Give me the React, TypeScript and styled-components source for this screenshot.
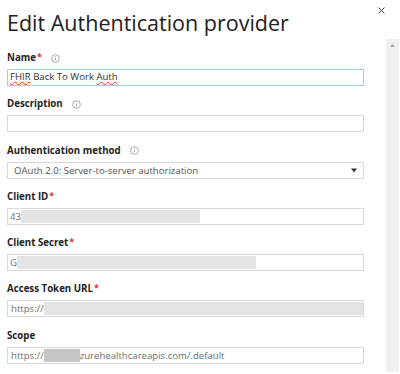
import styled, { createGlobalStyle } from "styled-components";

const GlobalStyle = createGlobalStyle`
  html, body {
    margin: 0;
    padding: 0;
    background: #fff;
  }
  body {
    font-family: "Open Sans", "Noto Sans", sans-serif;
    color: #323130;
  }
`;

const Panel = styled.div`
  width: 400px;
  height: 374px;
  overflow: hidden;
  background: #fff;
  display: flex;
  flex-direction: column;
`;

const Header = styled.div`
  flex-shrink: 0;
  display: flex;
  justify-content: space-between;
  align-items: flex-start;
  padding: 0 15px 0 7px;
  height: 39px;
`;

const Title = styled.h1`
  margin: 10px 0 0;
  font-size: 21.5px;
  font-weight: 400;
  color: #222;
  line-height: 26px;
`;

const CloseBtn = styled.button`
  border: none;
  background: none;
  padding: 0;
  width: 7px;
  height: 7px;
  margin-top: 7px;
  cursor: pointer;
  display: flex;
`;

const Body = styled.div`
  display: flex;
  flex: 1;
  min-height: 0;
  overflow: hidden;
`;

const Form = styled.div`
  flex-shrink: 0;
  width: 357px;
  padding: 11px 0 0 7px;
  display: flex;
  flex-direction: column;
  gap: 10.3px;
`;

const Scrollbar = styled.div`
  margin-left: 22px;
  width: 13px;
  height: 333px;
  background: #f0f0f0;
  display: flex;
  justify-content: center;
  padding-top: 5px;
  box-sizing: border-box;
`;

const Field = styled.div`
  display: flex;
  flex-direction: column;
  gap: 5px;
`;

const Label = styled.div`
  box-sizing: border-box;
  display: flex;
  align-items: center;
  height: 14px;
  padding-top: 2px;
  line-height: 12px;
  font-size: 9.7px;
  font-weight: 700;
  color: #252423;
`;

const Req = styled.span`
  color: #d13438;
  margin-left: 1px;
  align-self: flex-start;
  font-size: 9px;
  line-height: 9px;
`;

const Info = styled.span`
  margin-left: 9px;
  display: inline-flex;
`;

const Input = styled.div<{ focused?: boolean; pad?: number }>`
  box-sizing: border-box;
  height: 17px;
  border: 1px solid ${(p) => (p.focused ? "#9fcdf1" : "#d9d9d9")};
  background: #fff;
  display: flex;
  align-items: center;
  padding: 0 6px ${(p) => (p.focused ? 2 : 0)}px ${(p) => p.pad ?? 2}px;
  font-size: 9.6px;
  color: ${(p) => (p.focused ? "#333" : "#707070")};
  white-space: nowrap;
  overflow: hidden;
`;

const Spell = styled.span`
  text-decoration: underline wavy #e0322b;
  text-decoration-thickness: 1px;
  text-underline-offset: 0.5px;
  text-decoration-skip-ink: none;
`;

const Redact = styled.span<{ w: number; dark?: boolean }>`
  flex-shrink: 0;
  display: inline-block;
  width: ${(p) => p.w}px;
  height: 13px;
  background: ${(p) => (p.dark ? "#c6c6c6" : "#e4e4e4")};
`;

const SelectText = styled.span`
  flex: 1;
  color: #555;
`;

function InfoIcon() {
  return (
    <svg width="9" height="9" viewBox="0 0 10 10">
      <circle cx="5" cy="5" r="4.3" fill="none" stroke="#8a8886" strokeWidth="0.8" />
      <rect x="4.6" y="4.2" width="0.8" height="3" fill="#8a8886" />
      <rect x="4.6" y="2.6" width="0.8" height="0.8" fill="#8a8886" />
    </svg>
  );
}

export default function App() {
  return (
    <>
      <GlobalStyle />
      <Panel>
        <Header>
          <Title>Edit Authentication provider</Title>
          <CloseBtn aria-label="Close">
            <svg width="7" height="7" viewBox="0 0 7 7">
              <path d="M0.5 0.5L6.5 6.5M6.5 0.5L0.5 6.5" stroke="#4a5060" strokeWidth="1" />
            </svg>
          </CloseBtn>
        </Header>
        <Body>
          <Form>
            <Field>
              <Label>
                Name<Req>*</Req>
                <Info>
                  <InfoIcon />
                </Info>
              </Label>
              <Input focused>
                <Spell>FHIR</Spell>&nbsp;Back To Work&nbsp;<Spell>Auth</Spell>
              </Input>
            </Field>
            <Field>
              <Label>
                Description
                <Info>
                  <InfoIcon />
                </Info>
              </Label>
              <Input />
            </Field>
            <Field>
              <Label>
                Authentication method
                <Info>
                  <InfoIcon />
                </Info>
              </Label>
              <Input pad={6}>
                <SelectText>OAuth 2.0: Server-to-server authorization</SelectText>
                <svg width="6" height="5" viewBox="0 0 6 5">
                  <path d="M0 0.5H6L3 4.5Z" fill="#333" />
                </svg>
              </Input>
            </Field>
            <Field>
              <Label>
                Client ID<Req>*</Req>
              </Label>
              <Input>
                43
                <Redact w={179} />
              </Input>
            </Field>
            <Field>
              <Label>
                Client Secret<Req>*</Req>
              </Label>
              <Input>
                G
                <Redact w={239} />
              </Input>
            </Field>
            <Field>
              <Label>
                Access Token URL<Req>*</Req>
              </Label>
              <Input pad={3}>
                https://
                <Redact w={319} />
              </Input>
            </Field>
            <Field>
              <Label>Scope</Label>
              <Input pad={3}>
                https://
                <Redact w={36} dark />
                zurehealthcareapis.com/.default
              </Input>
            </Field>
          </Form>
          <Scrollbar>
            <svg width="5" height="3" viewBox="0 0 5 3">
              <path d="M0 3L2.5 0L5 3Z" fill="#a6a6a6" />
            </svg>
          </Scrollbar>
        </Body>
      </Panel>
    </>
  );
}
